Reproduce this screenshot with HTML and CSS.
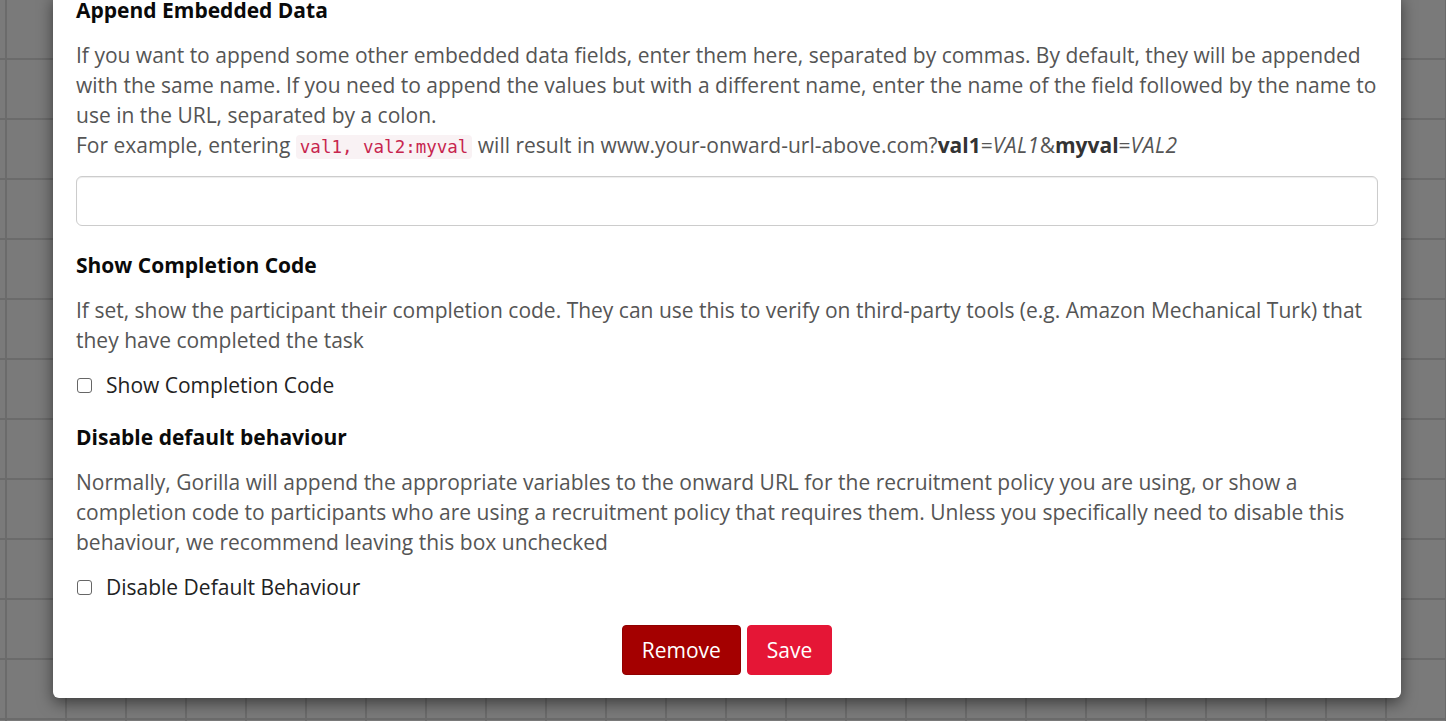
FILE: index.html
```html
<!DOCTYPE html>
<html>
<head>
<meta charset="utf-8">
<link rel="stylesheet" href="styles.css">
</head>
<body>
<div class="backdrop">
  <div class="modal">
    <div class="modal-body">
      <section class="field field-input">
        <h4 class="field-title">Append Embedded Data</h4>
        <p class="help">If you want to append some other embedded data fields, enter them here, separated by commas. By default, they will be appended with the same name. If you need to append the values but with a different name, enter the name of the field followed by the name to use in the URL, separated by a colon.<br>For example, entering <code>val1, val2:myval</code> will result in www.your-onward-url-above.com?<b>val1</b>=<i>VAL1</i>&amp;<b>myval</b>=<i>VAL2</i></p>
        <input class="text-input" type="text">
      </section>
      <section class="field">
        <h4 class="field-title">Show Completion Code</h4>
        <p class="help">If set, show the participant their completion code. They can use this to verify on third-party tools (e.g. Amazon Mechanical Turk) that they have completed the task</p>
        <label class="check"><span class="box"></span>Show Completion Code</label>
      </section>
      <section class="field">
        <h4 class="field-title">Disable default behaviour</h4>
        <p class="help">Normally, Gorilla will append the appropriate variables to the onward URL for the recruitment policy you are using, or show a completion code to participants who are using a recruitment policy that requires them. Unless you specifically need to disable this behaviour, we recommend leaving this box unchecked</p>
        <label class="check"><span class="box"></span>Disable Default Behaviour</label>
      </section>
    </div>
    <div class="modal-footer">
      <button class="btn btn-remove">Remove</button>
      <button class="btn btn-save">Save</button>
    </div>
  </div>
</div>
</body>
</html>
```

FILE: styles.css
```css
html, body {
  margin: 0;
  padding: 0;
}
body {
  font-family: "Open Sans", "Liberation Sans", sans-serif;
  font-size: 21px;
  line-height: 30px;
  color: #555;
  overflow: hidden;
}
.backdrop {
  height: 721px;
  box-sizing: border-box;
  display: flex;
  flex-direction: column;
  justify-content: flex-end;
  padding: 0 45px 23px 53px;
  overflow: hidden;
  background-color: #7a7a7a;
  background-image:
    linear-gradient(to right, #6b6b6b 0, #6b6b6b 2px, transparent 2px),
    linear-gradient(to bottom, #6b6b6b 0, #6b6b6b 2px, transparent 2px);
  background-size: 60px 60px, 60px 60px;
  background-position: 5px 0, 0 58px;
}
.modal {
  flex: none;
  background: #fff;
  border-radius: 0 0 6px 6px;
  box-shadow: 0 5px 15px rgba(0, 0, 0, 0.5);
}
.modal-body {
  padding: 0 23px;
}
.field {
  margin-bottom: 22px;
}
.field-input {
  margin-bottom: 24px;
}
.field-input .help {
  margin-bottom: 14px;
}
.field:last-child {
  margin-bottom: 0;
}
.field-title {
  margin: 0 0 15px;
  font-size: 21px;
  line-height: 30px;
  font-weight: 700;
  color: #0a0a0a;
}
.help {
  margin: 0 0 15px;
}
.help b {
  color: #333;
}
.help i {
  letter-spacing: 0.5px;
}
code {
  font-family: "DejaVu Sans Mono", "Liberation Mono", monospace;
  font-size: 17.5px;
  color: #c7254e;
  background: #f9f2f4;
  border-radius: 4px;
  padding: 2px 4px;
}
.text-input {
  display: block;
  width: 100%;
  box-sizing: border-box;
  height: 50px;
  margin: 0;
  border: 1px solid #ccc;
  border-radius: 6px;
  box-shadow: inset 0 1px 1px rgba(0, 0, 0, 0.075);
  font: inherit;
  padding: 0 12px;
}
.check {
  display: flex;
  align-items: center;
  color: #222;
}
.box {
  width: 13px;
  height: 13px;
  border: 1.5px solid #666;
  border-radius: 3px;
  margin: 0 14px 0 1px;
  background: #fff;
}
.modal-footer {
  display: flex;
  justify-content: center;
  gap: 6px;
  padding: 23px 0 23px;
}
.btn {
  font-family: inherit;
  font-size: 21px;
  line-height: 30px;
  color: #fff;
  border: 1px solid transparent;
  border-radius: 4px;
  padding: 9px 19px;
  height: 50px;
  cursor: pointer;
}
.btn-remove {
  background: #a40000;
  border-color: #900000;
}
.btn-save {
  background: #e51636;
  border-color: #e51636;
}
```
